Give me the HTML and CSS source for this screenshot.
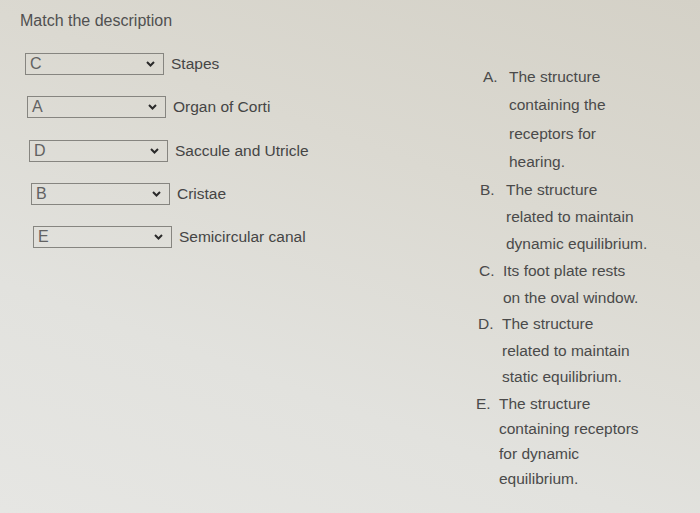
FILE: index.html
```html
<!DOCTYPE html>
<html>
<head>
<meta charset="utf-8">
<link rel="stylesheet" href="styles.css">
</head>
<body>
<div class="page">
  <div class="left">
    <div class="title">Match the description</div>
    <div class="rows">
      <div class="row">
        <div class="select"><span class="val">C</span><svg class="chev" width="9" height="6" viewBox="0 0 9 6"><path d="M1 1 L4.5 4.5 L8 1" fill="none" stroke="#2a2a2a" stroke-width="2"/></svg></div>
        <span class="label">Stapes</span>
      </div>
      <div class="row">
        <div class="select"><span class="val">A</span><svg class="chev" width="9" height="6" viewBox="0 0 9 6"><path d="M1 1 L4.5 4.5 L8 1" fill="none" stroke="#2a2a2a" stroke-width="2"/></svg></div>
        <span class="label">Organ of Corti</span>
      </div>
      <div class="row">
        <div class="select"><span class="val">D</span><svg class="chev" width="9" height="6" viewBox="0 0 9 6"><path d="M1 1 L4.5 4.5 L8 1" fill="none" stroke="#2a2a2a" stroke-width="2"/></svg></div>
        <span class="label">Saccule and Utricle</span>
      </div>
      <div class="row">
        <div class="select"><span class="val">B</span><svg class="chev" width="9" height="6" viewBox="0 0 9 6"><path d="M1 1 L4.5 4.5 L8 1" fill="none" stroke="#2a2a2a" stroke-width="2"/></svg></div>
        <span class="label">Cristae</span>
      </div>
      <div class="row">
        <div class="select"><span class="val">E</span><svg class="chev" width="9" height="6" viewBox="0 0 9 6"><path d="M1 1 L4.5 4.5 L8 1" fill="none" stroke="#2a2a2a" stroke-width="2"/></svg></div>
        <span class="label">Semicircular canal</span>
      </div>
    </div>
  </div>
  <ol class="options">
    <li class="opt"><span class="mark">A.</span><span class="txt">The structure<br>containing the<br>receptors for<br>hearing.</span></li>
    <li class="opt"><span class="mark">B.</span><span class="txt">The structure<br>related to maintain<br>dynamic equilibrium.</span></li>
    <li class="opt"><span class="mark">C.</span><span class="txt">Its foot plate rests<br>on the oval window.</span></li>
    <li class="opt"><span class="mark">D.</span><span class="txt">The structure<br>related to maintain<br>static equilibrium.</span></li>
    <li class="opt"><span class="mark">E.</span><span class="txt">The structure<br>containing receptors<br>for dynamic<br>equilibrium.</span></li>
  </ol>
</div>
</body>
</html>
```

FILE: styles.css
```css
html, body {
  margin: 0;
  padding: 0;
}
body {
  width: 700px;
  height: 513px;
  overflow: hidden;
  background: linear-gradient(200deg, #d4d1c7 0%, #dbd9d1 35%, #e2e2de 70%, #e6e6e3 100%);
  font-family: "Liberation Sans", Arial, sans-serif;
  color: #474747;
}
.page {
  display: flex;
  height: 513px;
}
.left {
  width: 476px;
  padding-left: 20px;
  box-sizing: border-box;
}
.title {
  margin-top: 11px;
  font-size: 16px;
  line-height: 20px;
  color: #505050;
}
.rows {
  margin-top: 22px;
  display: flex;
  flex-direction: column;
  gap: 21.25px;
}
.row {
  display: flex;
  align-items: center;
  gap: 7px;
}
.row:nth-child(1) { margin-left: 5px; }
.row:nth-child(2) { margin-left: 7px; }
.row:nth-child(3) { margin-left: 9px; }
.row:nth-child(4) { margin-left: 11px; }
.row:nth-child(5) { margin-left: 13px; }
.select {
  width: 139px;
  height: 22px;
  box-sizing: border-box;
  border: 1px solid #868580;
  display: flex;
  align-items: center;
  justify-content: space-between;
  padding: 0 8px 0 4px;
}
.val {
  font-size: 16px;
  color: #626262;
}
.chev {
  display: block;
}
.label {
  font-size: 15.5px;
  color: #454545;
}
.options {
  list-style: none;
  margin: 0;
  padding: 63px 0 0 0;
  display: flex;
  flex-direction: column;
  font-size: 15.5px;
  color: #4a4a4a;
}
.opt {
  display: flex;
  line-height: 27px;
}
.opt:nth-child(1) { margin-left: 7px; line-height: 28.3px; }
.opt:nth-child(2) { margin-left: 4px; line-height: 27px; }
.opt:nth-child(3) { margin-left: 3px; line-height: 27px; }
.opt:nth-child(4) { margin-left: 2px; line-height: 26.5px; }
.opt:nth-child(5) { margin-left: 0px; line-height: 25px; }
.mark {
  width: 26px;
  flex: none;
}
.opt:nth-child(3) .mark,
.opt:nth-child(4) .mark { width: 24px; }
.opt:nth-child(5) .mark { width: 23px; }
.txt {
  display: block;
}
```
